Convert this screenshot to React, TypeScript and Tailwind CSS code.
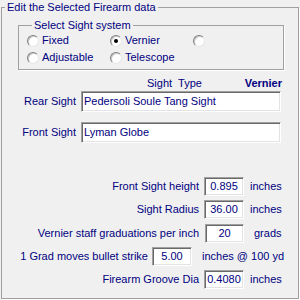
const navy = "text-[#000080]";

function Radio({ label, checked }: { label?: string; checked?: boolean }) {
  return (
    <div className="flex h-[17px] items-center">
      <span className="relative h-[12px] w-[12px] shrink-0 rounded-full border border-t-[#808080] border-l-[#808080] border-r-[#e6e6e6] border-b-[#e6e6e6] bg-white shadow-[inset_1px_1px_0_#c8c8c8]">
        {checked && (
          <span className="absolute left-[3px] top-[3px] h-[4px] w-[4px] rounded-full bg-black" />
        )}
      </span>
      {label && <span className="ml-[3px]">{label}</span>}
    </div>
  );
}

function Field({
  value,
  width,
  height,
  center,
}: {
  value: string;
  width: string;
  height: string;
  center?: boolean;
}) {
  return (
    <div
      className={`${width} ${height} flex shrink-0 items-center overflow-hidden border border-t-[#a0a0a0] border-l-[#a0a0a0] border-r-white border-b-white bg-white shadow-[inset_1px_1px_0_#696969,inset_-1px_-1px_0_#e3e3e3] ${
        center ? "justify-center" : "pl-[2px]"
      }`}
    >
      <span className="whitespace-nowrap">{value}</span>
    </div>
  );
}

export default function App() {
  return (
    <main
      className={`h-[300px] w-[300px] overflow-hidden bg-[#f0f0f0] px-[1px] pt-[1px] font-['Liberation_Sans',Arial,sans-serif] text-[11px] leading-[13px] ${navy}`}
    >
      <fieldset className="h-[298px] w-[298px] border border-[#a0a0a0] shadow-[1px_1px_0_#fff]">
        <legend className="ml-[3px] px-[2px]">Edit the Selected Firearm data</legend>

        <fieldset className="ml-[16px] mr-[14px] mt-[5px] border border-[#a0a0a0] pb-[3px] pl-[8px] shadow-[1px_1px_0_#fff]">
          <legend className="ml-[5px] px-[2px]">Select Sight system</legend>
          <div className="grid grid-cols-[83px_83px_auto]">
            <Radio label="Fixed" />
            <Radio label="Vernier" checked />
            <Radio />
            <Radio label="Adjustable" />
            <Radio label="Telescope" />
          </div>
        </fieldset>

        <div className="mt-[7px] flex h-[13px] items-center pl-[145px] pr-[16px]">
          <span>Sight</span>
          <span className="ml-[6px]">Type</span>
          <span className="ml-auto font-bold">Vernier</span>
        </div>

        <div className="mt-[1px] flex items-center">
          <span className="w-[74px] text-right">Rear Sight</span>
          <div className="ml-[5px]">
            <Field value="Pedersoli Soule Tang Sight" width="w-[200px]" height="h-[21px]" />
          </div>
        </div>
        <div className="mt-[10px] flex items-center">
          <span className="w-[74px] text-right">Front Sight</span>
          <div className="ml-[5px]">
            <Field value="Lyman Globe" width="w-[200px]" height="h-[21px]" />
          </div>
        </div>

        <div className="mt-[34px] flex flex-col">
          <div className="flex h-[19px] items-center">
            <span className="w-[197px] text-right">Front Sight height</span>
            <div className="ml-[5px]">
              <Field value="0.895" width="w-[40px]" height="h-[19px]" center />
            </div>
            <span className="ml-[6px]">inches</span>
          </div>
          <div className="mt-[4px] flex h-[19px] items-center">
            <span className="w-[197px] text-right">Sight Radius</span>
            <div className="ml-[5px]">
              <Field value="36.00" width="w-[40px]" height="h-[19px]" center />
            </div>
            <span className="ml-[6px]">inches</span>
          </div>
          <div className="mt-[5px] flex h-[19px] items-center">
            <span className="w-[197px] text-right">Vernier staff graduations per inch</span>
            <div className="ml-[6px]">
              <Field value="20" width="w-[39px]" height="h-[19px]" center />
            </div>
            <span className="ml-[10px]">grads</span>
          </div>
          <div className="mt-[4px] flex h-[19px] items-center">
            <span className="w-[146px] text-right">1 Grad moves bullet strike</span>
            <div className="ml-[4px]">
              <Field value="5.00" width="w-[40px]" height="h-[19px]" center />
            </div>
            <span className="ml-[10px]">inches @ 100 yd</span>
          </div>
          <div className="mt-[4px] flex h-[19px] items-center">
            <span className="w-[197px] text-right">Firearm Groove Dia</span>
            <div className="ml-[5px]">
              <Field value="0.4080" width="w-[40px]" height="h-[19px]" center />
            </div>
            <span className="ml-[6px]">inches</span>
          </div>
        </div>
      </fieldset>
    </main>
  );
}
